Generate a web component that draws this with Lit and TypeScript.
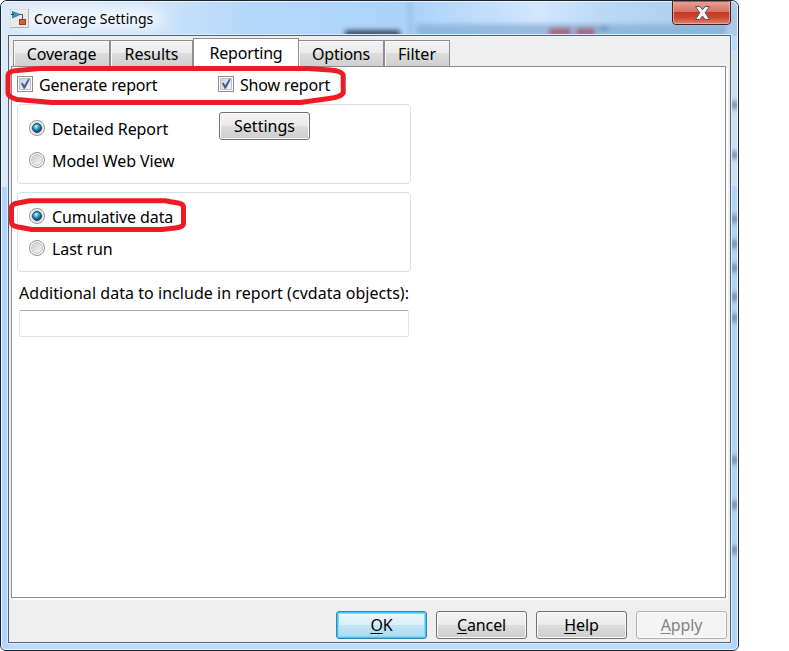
import { LitElement, html, css, svg } from "lit";
import { customElement, property } from "lit/decorators.js";
import { classMap } from "lit/directives/class-map.js";

@customElement("choice-item")
class ChoiceItem extends LitElement {
  @property() kind: "check" | "radio" = "radio";
  @property({ type: Boolean }) on = false;

  static styles = css`
    :host { display: flex; align-items: center; height: 22px; gap: 6px; letter-spacing: -.18px; }
    :host([kind="radio"]) { gap: 7px; letter-spacing: -.1px; }
    svg { flex: none; display: block; }
    span { white-space: nowrap; line-height: 22px; position: relative; top: 1px; }
  `;

  render() {
    const check = svg`
      <rect x="0.5" y="0.5" width="15" height="15" fill="#fdfdfd" stroke="#8e8f8f"/>
      <rect x="2.5" y="2.5" width="11" height="11" fill="url(#cb)" stroke="#bfc3c9"/>
      <path d="M4 7.4L5.6 6.5L7.2 9.2L11.2 2.8L12.7 3.4L8 12.8H6.6Z" fill="#4a5f97"/>`;
    const radio = svg`
      <circle cx="8" cy="8" r="7.5" fill="#fafafa" stroke="#8e8f8f"/>
      <circle cx="8" cy="8" r="5.4" fill="url(#rb)" stroke="#c0c2c5" stroke-width="1"/>
      ${this.on ? svg`<circle cx="8" cy="8" r="4.4" fill="url(#dot)" stroke="#1b4260" stroke-width="1"/>` : ""}`;
    return html`
      <svg width="16" height="16" viewBox="0 0 16 16">
        <defs>
          <linearGradient id="cb" x1="0" y1="0" x2="1" y2="1"><stop offset="0" stop-color="#c9cfd7"/><stop offset="1" stop-color="#f7f8f9"/></linearGradient>
          <linearGradient id="rb" x1="0" y1="0" x2="1" y2="1"><stop offset="0" stop-color="#cbcfd4"/><stop offset="1" stop-color="#f6f6f6"/></linearGradient>
          <radialGradient id="dot" cx="0.4" cy="0.32" r="0.7"><stop offset="0" stop-color="#d8f5ff"/><stop offset="0.25" stop-color="#6cc6e8"/><stop offset="0.6" stop-color="#1784b5"/><stop offset="1" stop-color="#12334f"/></radialGradient>
        </defs>
        ${this.kind === "check" ? check : radio}
      </svg>
      <span><slot></slot></span>`;
  }
}

@customElement("push-button")
class PushButton extends LitElement {
  @property() tone = "";

  static styles = css`
    :host { display: block; width: 91px; height: 28px; flex: none; }
    button {
      all: unset; box-sizing: border-box; display: block; width: 100%; height: 28px;
      border: 1px solid #707070; border-radius: 3px; text-align: center; line-height: 26px;
      box-shadow: inset 0 0 0 1px #fbfbfb;
      background: linear-gradient(#f3f3f3, #ebebeb 48%, #dddddd 50%, #cdcdcd);
    }
    .primary {
      border-color: #3c7fb1;
      box-shadow: inset 0 0 0 1px #3dcbf5, inset 0 0 0 2px #7fdcf8;
      background: linear-gradient(#ebf6fc, #dceffa 48%, #c4e5f6 50%, #acd9f0);
    }
    .off { border-color: #adb2b5; background: #f4f4f4; color: #838383; }
  `;

  render() {
    return html`<button class=${classMap({ primary: this.tone === "primary", off: this.tone === "off" })}><slot></slot></button>`;
  }
}

@customElement("app-root")
class AppRoot extends LitElement {
  static styles = css`
    :host { display: block; width: 789px; height: 651px; background: #fff; overflow: hidden; position: relative;
      font: 16px/22px "Noto Sans", "Open Sans", sans-serif; color: #000; }
    * { box-sizing: border-box; }
    .window { width: 739px; height: 651px; display: flex; flex-direction: column; position: relative; isolation: isolate;
      border: 1px solid #1c2430; border-radius: 7px 7px 6px 6px; overflow: hidden; background: #b8dafc; }
    .glass { position: absolute; inset: 0; z-index: -1; width: 737px; height: 649px; }
    .shine { position: absolute; inset: 0; z-index: -1; border: 1px solid #e9f4fd; border-radius: 6px 6px 5px 5px; }
    .bar { height: 34px; flex: none; display: flex; align-items: flex-start; padding-left: 9px; }
    .logo { margin-top: 8px; display: block; }
    .title { font-size: 14px; line-height: 20px; margin: 8px 0 0 5px; padding: 0; white-space: nowrap; letter-spacing: .03px; }
    .close { margin: 0 7px 0 auto; width: 59px; height: 24px; display: block; }
    .client { margin: 0 7px 7px 7px; width: 723px; height: 608px; border: 1px solid #536377; outline: 1px solid #dcecf9;
      background: #efefef; display: flex; flex-direction: column; padding: 3px 3px 0 2px; }
    .tabs { display: flex; align-items: flex-end; height: 28px; padding-left: 2px; margin-bottom: -1px; position: relative; flex: none; }
    .tab { height: 26px; border: 1px solid #8b8c95; border-bottom: 0; text-align: center; line-height: 27px;
      box-shadow: inset 1px 1px 0 #fafafa; background: linear-gradient(#f2f2f2, #ebebeb 46%, #dcdcdc 50%, #d0d0d0);
      margin-bottom: 1px; white-space: nowrap; }
    .tab.active { background: #fff; height: 29px; margin-bottom: 0; box-shadow: none; line-height: 28px; }
    .t1 { width: 97px; letter-spacing: -.15px; } .t2 { width: 83px; } .t3 { width: 106px; letter-spacing: -.2px; }
    .t4 { width: 85px; letter-spacing: -.2px; border-left: 0; } .t5 { width: 66px; }
    .page { width: 715px; height: 532px; border: 1px solid #8b8c95; background: #fff; box-shadow: 2px 2px 0 #fcfcfc; flex: none;
      display: flex; flex-direction: column; padding: 6px 0 0 5px; }
    .checks { display: grid; grid-template-columns: 201px auto; height: 22px; margin-bottom: 9px; }
    .group { width: 394px; height: 80px; border: 1px solid #d5dfe5; border-radius: 4px; margin-bottom: 8px;
      padding: 12px 0 0 11px; display: grid; grid-template-columns: 190px auto; align-content: start; align-items: start; row-gap: 10px; }
    .group push-button { margin-top: -5px; height: 22px; }
    .caption { margin: 2px 0 0 2px; line-height: 22px; letter-spacing: .045px; white-space: nowrap; height: 22px; }
    .field { all: unset; box-sizing: border-box; display: block; width: 390px; height: 27px; margin: 6px 0 0 2px; border: 1px solid #e2e3ea;
      border-top-color: #abadb3; border-radius: 2px; background: #fff; }
    .actions { display: flex; justify-content: flex-end; gap: 9px; margin: 13px 0 0 0; letter-spacing: -.1px; }
    .marks { position: absolute; left: 0; top: 0; pointer-events: none; }
    u { text-decoration-thickness: 1px; text-underline-offset: 2px; text-decoration-skip-ink: none; }
  `;

  render() {
    const spots = [105, 155, 219, 244, 268, 297, 318, 460, 505, 550];
    return html`
      <div class="window">
        <svg class="glass" viewBox="1 1 737 649">
          <defs>
            <linearGradient id="top"><stop offset="0" stop-color="#d9e8f8"/><stop offset=".2" stop-color="#cfe3f8"/><stop offset=".34" stop-color="#b4d8fb"/><stop offset=".56" stop-color="#add3fa"/><stop offset=".62" stop-color="#b9dafa"/><stop offset=".73" stop-color="#d3e6fd"/><stop offset=".82" stop-color="#b9d9f6"/><stop offset="1" stop-color="#a9cbe9"/></linearGradient>
            <filter id="b" x="-50%" y="-50%" width="200%" height="200%"><feGaussianBlur stdDeviation="2.5"/></filter>
            <filter id="b2" x="-50%" y="-80%" width="200%" height="260%"><feGaussianBlur stdDeviation="10 6"/></filter>
          </defs>
          <rect x="0" y="0" width="739" height="36" fill="url(#top)"/>
          <rect x="0" y="30" width="8" height="157" fill="#dbe9f6"/>
          <rect x="0" y="187" width="8" height="470" fill="#b3d5fb"/>
          <rect x="20" y="8" width="140" height="20" fill="#f2f8fe" filter="url(#b2)"/>
          <g filter="url(#b)">
            <rect x="416" y="24" width="310" height="14" fill="#7fa9d3" opacity=".7"/>
            <rect x="408" y="-2" width="4" height="40" fill="#8eb2d6" opacity=".6"/>
            <rect x="345" y="30" width="55" height="8" fill="#3e5167"/>
            <rect x="549" y="28" width="22" height="8" fill="#a2607a"/>
            <rect x="576" y="28" width="19" height="8" fill="#a2607a"/>
            <rect x="600" y="27" width="8" height="3" fill="#60809f"/>
          </g>
          <rect x="731" y="50" width="8" height="136" fill="#cfdff0"/>
          <rect x="731" y="186" width="8" height="465" fill="#b1d3f5"/>
          <g filter="url(#b)">${spots.map((y) => svg`<rect x="729" y=${y - 4} width="12" height="8" fill="#6583a8" opacity=".8"/>`)}</g>
        </svg>
        <div class="shine"></div>
        <div class="bar">
          <svg class="logo" width="19" height="19" viewBox="0 0 19 19">
            <rect x=".5" y=".5" width="18" height="18" fill="#e9e9e9" stroke="#b5b5b5"/>
            <path d="M1 18V1H18" fill="none" stroke="#fff"/>
            <path d="M9 5.500H12.500V10" fill="none" stroke="#4b4b4b"/>
            <path d="M2.500 2.500L10 5.500L2.500 9Z" fill="#2d9ad0" stroke="#2377a5" stroke-width=".8"/>
            <path d="M1 5.500H4" stroke="#333"/>
            <rect x="9.500" y="10.500" width="6" height="5" fill="#e1592c" stroke="#99401f"/>
          </svg>
          <div class="title">Coverage Settings</div>
          <svg class="close" viewBox="0 0 59 24">
            <defs><linearGradient id="cl" x2="0" y2="1"><stop offset="0" stop-color="#e9a59b"/><stop offset=".46" stop-color="#d9705f"/><stop offset=".48" stop-color="#c33a22"/><stop offset=".7" stop-color="#cc4630"/><stop offset="1" stop-color="#dd8a76"/></linearGradient></defs>
            <path d="M.5 0V20Q.5 23.5 4 23.5H55Q58.500 23.500 58.500 20V0Z" fill="url(#cl)" stroke="#4f1c1c"/>
            <path d="M1.500 0V20Q1.500 22.500 4 22.500H55Q57.500 22.500 57.500 20V0" fill="none" stroke="#f0b5aa" stroke-opacity=".75"/>
            <path d="M23.500 5.500H27.800L30.500 8.700L33.200 5.500H37.500L33.200 11.800L37.500 18.500H33.200L30.500 15L27.800 18.500H23.500L27.800 11.800Z" fill="#f4f4f6" stroke="#535666" stroke-linejoin="round"/>
          </svg>
        </div>
        <div class="client">
          <div class="tabs">
            <div class="tab t1">Coverage</div><div class="tab t2">Results</div><div class="tab t3 active">Reporting</div><div class="tab t4">Options</div><div class="tab t5">Filter</div>
          </div>
          <div class="page">
            <div class="checks">
              <choice-item kind="check" on>Generate report</choice-item>
              <choice-item kind="check" on>Show report</choice-item>
            </div>
            <div class="group">
              <choice-item kind="radio" on>Detailed Report</choice-item>
              <push-button>Settings</push-button>
              <choice-item kind="radio">Model Web View</choice-item>
            </div>
            <div class="group">
              <choice-item kind="radio" on>Cumulative data</choice-item><span></span>
              <choice-item kind="radio">Last run</choice-item>
            </div>
            <div class="caption">Additional data to include in report (cvdata objects):</div>
            <input class="field" />
          </div>
          <div class="actions">
            <push-button tone="primary"><u>O</u>K</push-button>
            <push-button><u>C</u>ancel</push-button>
            <push-button><u>H</u>elp</push-button>
            <push-button tone="off"><u>A</u>pply</push-button>
          </div>
        </div>
      </div>
      <svg class="marks" width="400" height="240" fill="none" stroke="#ed1c24" stroke-width="5" stroke-linejoin="round">
        <path d="M40 68.500H308L330 70Q342 71 343.200 75V93Q341 97 329 98.500L300 102.500H52L17 99.500Q8 97 8 93V75Q9 71 17 70.500Z"/>
        <path d="M30 200.700H165L178 203Q183.500 204 183.500 207V224Q183 227 175 228L162 229.500H32L18 227Q11.500 226 11.500 222V207Q12 204 18 203Z"/>
      </svg>`;
  }
}
